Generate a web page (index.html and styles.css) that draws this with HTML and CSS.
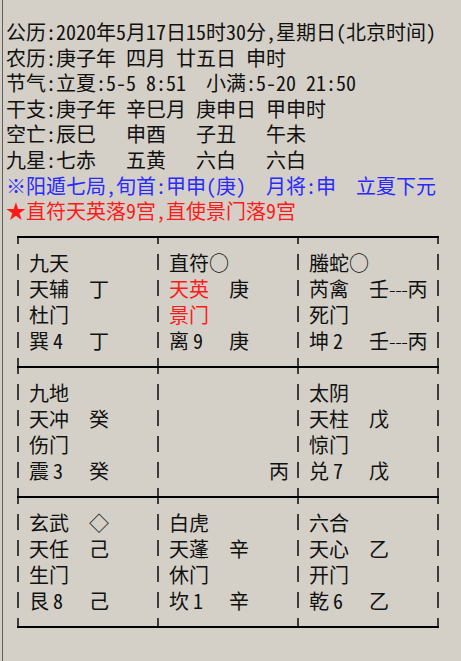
FILE: index.html
```html
<!DOCTYPE html>
<html lang="zh-CN">
<head>
<meta charset="utf-8">
<title>奇门遁甲排盘</title>
<link rel="stylesheet" href="styles.css">
</head>
<body>
<div class="frame">
  <div class="info">
    <div class="line">公历:2020年5月17日15时30分,星期日(北京时间)</div>
    <div class="line"><span class="c50">农历:</span><span class="c70">庚子年</span><span class="c50">四月</span><span class="c70">廿五日</span><span>申时</span></div>
    <div class="line"><span class="c50">节气:</span><span class="c150">立夏:5-5 8:51</span><span>小满:5-20 21:50</span></div>
    <div class="line"><span class="c50">干支:</span><span class="c70">庚子年</span><span class="c70">辛巳月</span><span class="c70">庚申日</span><span>甲申时</span></div>
    <div class="line"><span class="c50">空亡:</span><span class="c70">辰巳</span><span class="c70">申酉</span><span class="c70">子丑</span><span>午未</span></div>
    <div class="line"><span class="c50">九星:</span><span class="c70">七赤</span><span class="c70">五黄</span><span class="c70">六白</span><span>六白</span></div>
    <div class="line blue"><span class="c260">※阳遁七局,旬首:甲申(庚)</span><span class="c90">月将:申</span><span>立夏下元</span></div>
    <div class="line red">★直符天英落9宫,直使景门落9宫</div>
  </div>

  <div class="board">
    <div class="row">
      <div class="cell">
        <div class="ln"><span class="k">九天</span></div>
        <div class="ln"><span class="k">天辅</span><span>丁</span></div>
        <div class="ln"><span class="k">杜门</span></div>
        <div class="ln"><span class="k">巽<span class="num">4</span></span><span>丁</span></div>
      </div>
      <div class="cell">
        <div class="ln"><span class="k">直符○</span></div>
        <div class="ln"><span class="k red">天英</span><span>庚</span></div>
        <div class="ln"><span class="k red">景门</span></div>
        <div class="ln"><span class="k">离<span class="num">9</span></span><span>庚</span></div>
      </div>
      <div class="cell">
        <div class="ln"><span class="k">螣蛇○</span></div>
        <div class="ln"><span class="k">芮禽</span><span>壬<span class="dash">---</span>丙</span></div>
        <div class="ln"><span class="k">死门</span></div>
        <div class="ln"><span class="k">坤<span class="num">2</span></span><span>壬<span class="dash">---</span>丙</span></div>
      </div>
    </div>
    <div class="row">
      <div class="cell">
        <div class="ln"><span class="k">九地</span></div>
        <div class="ln"><span class="k">天冲</span><span>癸</span></div>
        <div class="ln"><span class="k">伤门</span></div>
        <div class="ln"><span class="k">震<span class="num">3</span></span><span>癸</span></div>
      </div>
      <div class="cell">
        <div class="ln"></div>
        <div class="ln"></div>
        <div class="ln"></div>
        <div class="ln"><span class="far">丙</span></div>
      </div>
      <div class="cell">
        <div class="ln"><span class="k">太阴</span></div>
        <div class="ln"><span class="k">天柱</span><span>戊</span></div>
        <div class="ln"><span class="k">惊门</span></div>
        <div class="ln"><span class="k">兑<span class="num">7</span></span><span>戊</span></div>
      </div>
    </div>
    <div class="row">
      <div class="cell">
        <div class="ln"><span class="k">玄武</span><span>◇</span></div>
        <div class="ln"><span class="k">天任</span><span>己</span></div>
        <div class="ln"><span class="k">生门</span></div>
        <div class="ln"><span class="k">艮<span class="num">8</span></span><span>己</span></div>
      </div>
      <div class="cell">
        <div class="ln"><span class="k">白虎</span></div>
        <div class="ln"><span class="k">天蓬</span><span>辛</span></div>
        <div class="ln"><span class="k">休门</span></div>
        <div class="ln"><span class="k">坎<span class="num">1</span></span><span>辛</span></div>
      </div>
      <div class="cell">
        <div class="ln"><span class="k">六合</span></div>
        <div class="ln"><span class="k">天心</span><span>乙</span></div>
        <div class="ln"><span class="k">开门</span></div>
        <div class="ln"><span class="k">乾<span class="num">6</span></span><span>乙</span></div>
      </div>
    </div>
  </div>
</div>
</body>
</html>
```

FILE: styles.css
```css
html, body {
  margin: 0;
  padding: 0;
}

body {
  background: #d4d0c8;
  color: #111;
  font-family: "Noto Sans Mono CJK SC", "Noto Sans CJK SC", "DejaVu Sans", sans-serif;
  font-size: 20px;
  font-weight: 300;
}

.frame {
  margin-left: 2px;
  border-left: 1px solid #5f5f5f;
  min-height: 661px;
  box-sizing: border-box;
  padding: 19px 0 0 3px;
}

.info .line {
  display: flex;
  height: 25.6px;
  line-height: 25.6px;
  white-space: pre;
}

.info .line > span {
  flex: none;
}

.c50 { width: 50px; }
.c70 { width: 70px; }
.c90 { width: 90px; }
.c150 { width: 150px; }
.c260 { width: 260px; }

.blue { color: #2a2aff; }
.red { color: #ff1a1a; }

.board {
  margin: 12px 0 0 11px;
  width: 422px;
  background-image:
    repeating-linear-gradient(to bottom, #3c3c3c 0 8px, transparent 8px 18px, #3c3c3c 18px 26px),
    repeating-linear-gradient(to bottom, #3c3c3c 0 8px, transparent 8px 18px, #3c3c3c 18px 26px),
    repeating-linear-gradient(to bottom, #3c3c3c 0 8px, transparent 8px 18px, #3c3c3c 18px 26px),
    repeating-linear-gradient(to bottom, #3c3c3c 0 8px, transparent 8px 18px, #3c3c3c 18px 26px);
  background-size: 2px 100%;
  background-repeat: no-repeat;
  background-position: 0 0, 140px 0, 280px 0, 420px 0;
}

.row {
  display: grid;
  grid-template-columns: repeat(3, 140px);
  border-top: 2px solid #000;
  height: 130px;
  box-sizing: border-box;
}

.row:last-child {
  border-bottom: 2px solid #000;
  height: 132px;
}

.cell {
  padding: 12px 0 0 12px;
}

.ln {
  display: flex;
  height: 26px;
  line-height: 26px;
  white-space: pre;
}

.k {
  width: 60px;
  flex: none;
}

.num {
  margin-left: 4px;
}

.dash {
  font-family: "Noto Sans CJK SC", "DejaVu Sans", sans-serif;
  letter-spacing: -0.5px;
}

.far {
  padding-left: 100px;
}
```
